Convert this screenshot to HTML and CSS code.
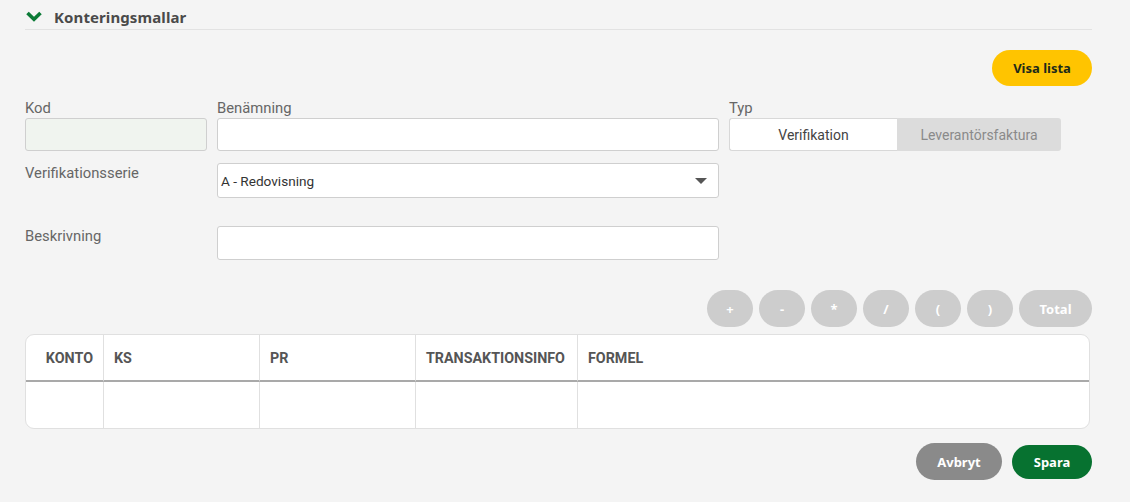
FILE: index.html
```html
<!DOCTYPE html>
<html lang="sv">
<head>
<meta charset="utf-8">
<title>Konteringsmallar</title>
<link rel="stylesheet" href="styles.css">
</head>
<body>
<div class="page">
  <div class="section-head">
    <svg class="chev" width="16" height="11" viewBox="0 0 16 11"><path d="M1.5 2 L8 8.2 L14.5 2" fill="none" stroke="#0b7a36" stroke-width="3.6" stroke-linejoin="miter"/></svg>
    <span class="section-title">Konteringsmallar</span>
  </div>

  <div class="top-actions">
    <button class="btn btn-yellow">Visa lista</button>
  </div>

  <div class="form-grid">
    <div class="field">
      <label class="lbl">Kod</label>
      <div class="input input-code"></div>
    </div>
    <div class="field">
      <label class="lbl">Benämning</label>
      <div class="input"></div>
    </div>
    <div class="field">
      <label class="lbl">Typ</label>
      <div class="toggle">
        <span class="toggle-opt active">Verifikation</span>
        <span class="toggle-opt">Leverantörsfaktura</span>
      </div>
    </div>

    <div class="row-label r2">Verifikationsserie</div>
    <div class="select">
      <span>A - Redovisning</span>
      <span class="caret"></span>
    </div>

    <div class="row-label r3">Beskrivning</div>
    <div class="input desc"></div>
  </div>

  <div class="ops">
    <button class="btn btn-op">+</button>
    <button class="btn btn-op">-</button>
    <button class="btn btn-op">*</button>
    <button class="btn btn-op">/</button>
    <button class="btn btn-op">(</button>
    <button class="btn btn-op">)</button>
    <button class="btn btn-op btn-total">Total</button>
  </div>

  <div class="table">
    <div class="th c1">KONTO</div>
    <div class="th c2">KS</div>
    <div class="th c3">PR</div>
    <div class="th c4">TRANSAKTIONSINFO</div>
    <div class="th c5">FORMEL</div>
    <div class="td c1"></div>
    <div class="td c2"></div>
    <div class="td c3"></div>
    <div class="td c4"></div>
    <div class="td c5"></div>
  </div>

  <div class="footer">
    <button class="btn btn-grey">Avbryt</button>
    <button class="btn btn-green">Spara</button>
  </div>
</div>
</body>
</html>
```

FILE: styles.css
```css
* { box-sizing: border-box; }
html, body { margin: 0; padding: 0; }
body {
  background: #f4f4f4;
  font-family: Roboto, "Liberation Sans", sans-serif;
  color: #333;
  width: 1130px;
  height: 502px;
  overflow: hidden;
}
.page {
  padding: 0 38px 0 25px;
}
.section-head {
  display: flex;
  align-items: center;
  height: 30px;
  padding-top: 4px;
  border-bottom: 1px solid #e2e2e2;
}
.chev { margin-left: 1px; margin-right: 12px; }
.section-title {
  font-family: "Noto Sans", "Open Sans", sans-serif;
  font-weight: 700;
  font-size: 15px;
  color: #4a4a4a;
  letter-spacing: 0.1px;
}
.top-actions {
  display: flex;
  justify-content: flex-end;
  margin-top: 20px;
}
.btn {
  border: none;
  border-radius: 19px;
  font-family: "Noto Sans", "Open Sans", sans-serif;
  font-weight: 700;
  font-size: 13px;
  cursor: pointer;
  padding: 0;
}
.btn-yellow {
  background: #ffc400;
  color: #1e2a1a;
  width: 100px;
  height: 36px;
}
.form-grid {
  display: grid;
  grid-template-columns: 182px 502px 332px;
  column-gap: 10px;
  margin-top: 12px;
}
.field { display: flex; flex-direction: column; }
.lbl, .row-label {
  font-size: 14.8px;
  color: #666;
  line-height: 20px;
}
.input {
  height: 33px;
  background: #fff;
  border: 1px solid #cfcfcf;
  border-radius: 3px;
}
.input-code { background: #f0f4ef; }
.toggle {
  display: flex;
  height: 33px;
  border-radius: 3px;
  overflow: hidden;
  background: #dcdcdc;
}
.toggle-opt {
  flex: 0 0 164px;
  display: flex;
  align-items: center;
  justify-content: center;
  font-size: 14px;
  color: #8a8a8a;
}
.toggle-opt.active {
  flex-basis: 168px;
  background: #fff;
  border: 1px solid #d8d8d8;
  border-right: none;
  border-radius: 3px 0 0 3px;
  color: #444;
}
.row-label { padding-top: 1px; }
.r2 { margin-top: 11px; }
.select {
  margin-top: 12px;
  height: 35px;
  background: #fff;
  border: 1px solid #cfcfcf;
  border-radius: 3px;
  display: flex;
  align-items: center;
  justify-content: space-between;
  padding: 0 11px 0 3px;
  font-size: 13.6px;
  color: #333;
}
.caret {
  width: 0; height: 0;
  border-left: 6px solid transparent;
  border-right: 6px solid transparent;
  border-top: 6px solid #555;
  margin-top: 1px;
}
.r3 { margin-top: 27px; grid-column: 1; }
.desc { margin-top: 28px; height: 34px; }
.ops {
  display: flex;
  justify-content: flex-end;
  gap: 6px;
  margin-top: 30px;
}
.btn-op {
  background: #cdcdcd;
  color: #fff;
  width: 46px;
  height: 37px;
  font-size: 13px;
}
.btn-total { width: 73px; }
.table {
  margin-top: 7px;
  width: 1065px;
  display: grid;
  grid-template-columns: 77px 156px 156px 162px 1fr;
  background: #fff;
  border: 1px solid #e0e0e0;
  border-radius: 9px;
  overflow: hidden;
}
.th {
  height: 47px;
  display: flex;
  align-items: center;
  padding: 0 10px;
  font-size: 14.3px;
  font-weight: 700;
  color: #555;
  border-bottom: 2px solid #a9a9a9;
  border-left: 1px solid #e0e0e0;
}
.th.c1 { justify-content: flex-end; border-left: none; }
.td {
  height: 46px;
  border-left: 1px solid #e0e0e0;
}
.td.c1 { border-left: none; }
.footer {
  display: flex;
  justify-content: flex-end;
  gap: 10px;
  align-items: center;
  margin-top: 14px;
}
.btn-grey {
  background: #8a8a8a;
  color: #fff;
  width: 86px;
  height: 37px;
}
.btn-green {
  background: #077230;
  color: #fff;
  width: 80px;
  height: 34px;
}
```
